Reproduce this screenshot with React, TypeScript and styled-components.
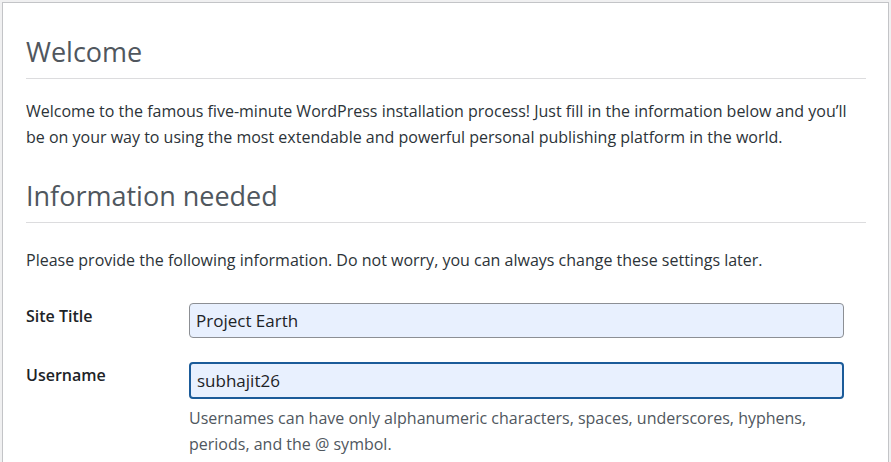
import React from 'react';
import styled, { createGlobalStyle } from 'styled-components';

const GlobalStyle = createGlobalStyle`
  html, body {
    margin: 0;
    padding: 0;
    background: #f0f0f1;
  }
  body {
    font-family: 'Open Sans', 'Noto Sans', sans-serif;
    color: #2c3338;
    overflow: hidden;
  }
`;

const Page = styled.div`
  padding: 2px 0 0 2px;
  width: 887px;
`;

const Panel = styled.div`
  background: #fff;
  border: 1px solid #c3c4c7;
  border-bottom: none;
  padding: 31px 22px 40px 23px;
  height: 500px;
`;

const Heading = styled.h1<{ $spaced?: boolean }>`
  margin: ${({ $spaced }) => ($spaced ? '28px' : '0')} 0 0;
  padding: 0 0 8px;
  font-size: 27px;
  font-weight: 400;
  line-height: 36px;
  color: #50575e;
  border-bottom: 1px solid #dcdcde;
`;

const Paragraph = styled.p<{ $gap: number }>`
  margin: ${({ $gap }) => $gap}px 0 0;
  font-size: 16px;
  line-height: 26px;
  color: #2c3338;
`;

const FormTable = styled.div`
  display: grid;
  grid-template-columns: 163px 655px;
  row-gap: 24px;
  margin-top: 30px;
`;

const Label = styled.label`
  font-size: 16px;
  font-weight: 600;
  line-height: 20px;
  padding-top: 3px;
  color: #1d2327;
`;

const Field = styled.div`
  display: flex;
  flex-direction: column;
`;

const Input = styled.input<{ $focused?: boolean }>`
  box-sizing: border-box;
  width: 100%;
  height: ${({ $focused }) => ($focused ? '37px' : '35px')};
  padding: 0 6px;
  font-family: inherit;
  font-size: 17px;
  color: #1d2327;
  background: #e8f0fe;
  border: ${({ $focused }) =>
    $focused ? '2px solid #1b5b99' : '1px solid #8c8f94'};
  border-radius: 4px;
  outline: none;
`;

const Help = styled.p`
  margin: 6px 0 0;
  font-size: 16px;
  line-height: 26px;
  color: #50575e;
`;

export default function App() {
  return (
    <Page>
      <GlobalStyle />
      <Panel>
        <Heading>Welcome</Heading>
        <Paragraph $gap={19}>
          Welcome to the famous five-minute WordPress installation process! Just
          fill in the information below and you’ll
          <br />
          be on your way to using the most extendable and powerful personal
          publishing platform in the world.
        </Paragraph>
        <Heading as="h2" $spaced>
          Information needed
        </Heading>
        <Paragraph $gap={24}>
          Please provide the following information. Do not worry, you can always
          change these settings later.
        </Paragraph>
        <FormTable>
          <Label htmlFor="weblog_title">Site Title</Label>
          <Field>
            <Input id="weblog_title" defaultValue="Project Earth" />
          </Field>
          <Label htmlFor="user_login">Username</Label>
          <Field>
            <Input id="user_login" defaultValue="subhajit26" $focused />
            <Help>
              Usernames can have only alphanumeric characters, spaces,
              underscores, hyphens,
              <br />
              periods, and the @ symbol.
            </Help>
          </Field>
        </FormTable>
      </Panel>
    </Page>
  );
}
